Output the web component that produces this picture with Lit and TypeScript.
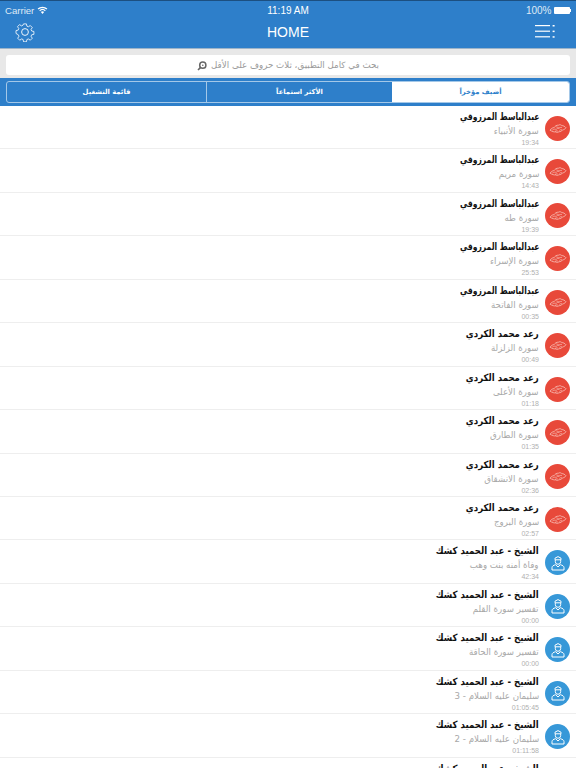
import { LitElement, html, css, svg } from "lit";
import { customElement } from "lit/decorators.js";

const A = "عبدالباسط المرزوقي";
const B = "رعد محمد الكردي";
const C = "الشيخ - عبد الحميد كشك";
const rows: [string, string, string, number][] = [
  [A, "سورة الأنبياء", "19:34", 0],
  [A, "سورة مريم", "14:43", 0],
  [A, "سورة طه", "19:39", 0],
  [A, "سورة الإسراء", "25:53", 0],
  [A, "سورة الفاتحة", "00:35", 0],
  [B, "سورة الزلزلة", "00:49", 0],
  [B, "سورة الأعلى", "01:18", 0],
  [B, "سورة الطارق", "01:35", 0],
  [B, "سورة الانشقاق", "02:36", 0],
  [B, "سورة البروج", "02:57", 0],
  [C, "وفاة أمنه بنت وهب", "42:34", 1],
  [C, "تفسير سورة القلم", "00:00", 1],
  [C, "تفسير سورة الحاقة", "00:00", 1],
  [C, "سليمان عليه السلام - 3", "01:05:45", 1],
  [C, "سليمان عليه السلام - 2", "01:11:58", 1],
  [C, "", "", 1],
];

const gear = svg`<svg class="gear" viewBox="0 0 20 20" width="20" height="20" fill="none" stroke="#fff" stroke-width="0.9" stroke-linejoin="round">
<path d="M8.4 1h3.2l.5 2.5 1.6.7 2.2-1.4 2.2 2.3-1.4 2.1.7 1.7 2.5.5v3.2l-2.5.5-.7 1.6 1.4 2.2-2.2 2.2-2.2-1.4-1.6.7-.5 2.5H8.4l-.5-2.5-1.6-.7-2.2 1.4-2.2-2.2 1.4-2.2-.7-1.6L0 11.6V8.4l2.4-.5.7-1.7-1.4-2.1 2.2-2.3 2.2 1.4 1.6-.7z" transform="translate(1 1) scale(.9)"/>
<circle cx="10" cy="10" r="3.4"/></svg>`;

const wifi = svg`<svg width="11" height="8" viewBox="0 0 14 10" fill="#fff"><path d="M7 10 4.9 7.6a3 3 0 0 1 4.2 0z"/><path d="M3.9 6.5 2.9 5.4a6 6 0 0 1 8.2 0l-1 1.1a4.5 4.5 0 0 0-6.2 0z"/><path d="M1.9 4.4.8 3.2a9 9 0 0 1 12.4 0l-1.1 1.2a7.4 7.4 0 0 0-10.2 0z"/></svg>`;

const menu = svg`<svg width="20" height="13" viewBox="0 0 20 13" fill="#fff"><rect y="0" width="15" height="1.2"/><rect y="5.6" width="15" height="1.2"/><rect y="11.2" width="15" height="1.2"/><rect x="17.6" y="0" width="2" height="1.5"/><rect x="17.6" y="5.6" width="2" height="1.5"/><rect x="17.6" y="11.2" width="2" height="1.5"/></svg>`;

const search = svg`<svg width="10" height="10" viewBox="0 0 10 10" fill="none" stroke="#666"><circle cx="5.8" cy="4.2" r="3.1" stroke-width="1.5"/><path d="M3.4 6.6 1 9" stroke-width="1.6"/><circle cx="5.8" cy="4.2" r=".8" fill="#666" stroke="none"/></svg>`;

const quran = svg`<svg width="18" height="11" viewBox="0 0 18 11" fill="none" stroke="#f9d0c9" stroke-width=".7" stroke-linejoin="round"><path d="M1 7.2C2.5 5.2 4 4.6 5.2 4.6 6 3 7.6 2 9.4 2.2c1.2-.8 2.6-.5 3.4.4 1.6 0 3 .8 4.2 2.2-1 1.4-2.4 2-3.6 2.2-.8 1.2-2 1.9-3.4 1.7-1 .8-2.3.9-3.4.2-1.6.2-3.2-.3-5.6-1.7z"/><path d="M3.4 7c1.3-.9 2.6-1 3.8-.6.9-1 2-1.4 3.2-1.2M7.2 3.8c1 .2 1.9.7 2.6 1.4.9-.7 2-1 3.2-.7M6 8.4c.8-.5 1.8-.7 2.8-.4M10.400 7.400c.7-.6 1.500-.9 2.400-.8" stroke-width=".6"/></svg>`;

const sheikh = svg`<svg width="14" height="16" viewBox="0 0 14 16" fill="none" stroke="#fff" stroke-width="1"><path d="M4 3.200 7 1.600l3 1.600v1.600H4z"/><path d="M4.300 5v1.600a2.700 2.700 0 0 0 5.400 0V5"/><path d="M1 15v-2.400c0-1.400 1.300-2.200 3.600-2.900L7 12l2.400-2.300c2.300.7 3.600 1.500 3.600 2.900V15z"/></svg>`;

@customElement("app-root")
export class AppRoot extends LitElement {
  static styles = css`
    :host { display: block; width: 576px; height: 768px; overflow: hidden; background: #fff;
      font-family: "Liberation Sans", "DejaVu Sans", sans-serif; }
    .top { background: #2e7fca; color: #fff; border-top: 1px solid #1c4f80; border-bottom: 1px solid #9db4c9; box-sizing: border-box; height: 49px; }
    .status { height: 18px; display: grid; grid-template-columns: 1fr auto 1fr; align-items: center; padding: 0 5px; font-size: 10px; color: #dfeaf6; }
    .status .l { display: flex; align-items: center; gap: 3px; font-size: 9.600px; }
    .status .c { color: #fff; }
    .status .r { display: flex; justify-content: flex-end; align-items: center; gap: 2px; }
    .batt { width: 16px; height: 7px; background: #fff; border-radius: 1px; }
    .nip { width: 1.5px; height: 3px; background: #fff; margin-left: -2px; }
    .nav { display: grid; grid-template-columns: 1fr auto 1fr; align-items: center; height: 25px; padding: 0 21px 0 15px; font-size: 14px; }
    .nav .t { margin-left: 6px; }
    .nav .m { justify-self: end; display: flex; }
    .gear { display: block; }
    .searchbar { background: #e8e8e8; height: 29px; padding: 6px 6px 3px 6px; box-sizing: border-box; }
    .input { background: #fff; border-radius: 3px; height: 20px; display: flex; justify-content: center; align-items: center; gap: 4px;
      direction: rtl; font: 8.700px "DejaVu Sans", sans-serif; color: #9a9a9a; }
    .input svg { margin-top: 1px; }
    .tabsbar { background: #2e7fca; height: 28px; padding: 3px 6px 3px 6px; box-sizing: border-box; }
    .tabs { display: grid; grid-template-columns: 199px 186px 177px; height: 22px; border: 1px solid #a4c8e8; border-radius: 3px; box-sizing: border-box; overflow: hidden; }
    .tab { display: flex; align-items: center; justify-content: center; font: bold 6.800px "DejaVu Sans", sans-serif; color: #fff; }
    .tab + .tab { border-left: 1px solid #a4c8e8; }
    .tab.on { background: #fff; color: #2e7fca; border-left: 0; }
    .row { height: 43.440px; box-sizing: border-box; border-bottom: 1px solid #eeeeee; display: flex; justify-content: flex-end; gap: 6px; padding: 4px 6px 0 0; }
    .text { direction: rtl; display: flex; flex-direction: column; align-items: flex-start; font-family: "DejaVu Sans", sans-serif; }
    .name { font-size: 10px; font-weight: 700; color: #111; line-height: 14px; height: 14px; white-space: nowrap; transform: scaleX(.86); transform-origin: right center; }
    .name.tight { transform: scaleX(.76); }
    .sub { font-size: 9px; color: #a8a8a8; line-height: 12px; height: 12px; margin-top: 1px; white-space: nowrap; transform: scaleX(.96); transform-origin: right center; }
    .time { direction: ltr; font: 7px "Liberation Sans", sans-serif; color: #b0b0b0; line-height: 8px; margin-top: 2px; align-self: flex-start; }
    .avatar { width: 25px; height: 25px; border-radius: 50%; margin-top: 6px; display: flex; align-items: center; justify-content: center; flex: none; }
    .avatar.red { background: #e8493a; }
    .avatar.blue { background: #3798d8; }
  `;

  render() {
    return html`
      <div class="top">
        <div class="status">
          <div class="l"><span>Carrier</span>${wifi}</div>
          <div class="c">11:19 AM</div>
          <div class="r"><span>100%</span><span class="batt"></span><span class="nip"></span></div>
        </div>
        <div class="nav"><div>${gear}</div><div class="t">HOME</div><div class="m">${menu}</div></div>
      </div>
      <div class="searchbar">
        <div class="input"><span>بحث في كامل التطبيق، ثلاث حروف على الأقل</span>${search}</div>
      </div>
      <div class="tabsbar">
        <div class="tabs">
          <div class="tab">قائمة التشغيل</div>
          <div class="tab">الأكثر استماعاً</div>
          <div class="tab on">أضيف مؤخراً</div>
        </div>
      </div>
      ${rows.map(([n, s, t, k]) => html`
        <div class="row">
          <div class="text">
            <div class="name ${n === A ? "tight" : ""}">${n}</div>
            <div class="sub">${s}</div>
            <div class="time">${t}</div>
          </div>
          <div class="avatar ${k ? "blue" : "red"}">${k ? sheikh : quran}</div>
        </div>`)}
    `;
  }
}
